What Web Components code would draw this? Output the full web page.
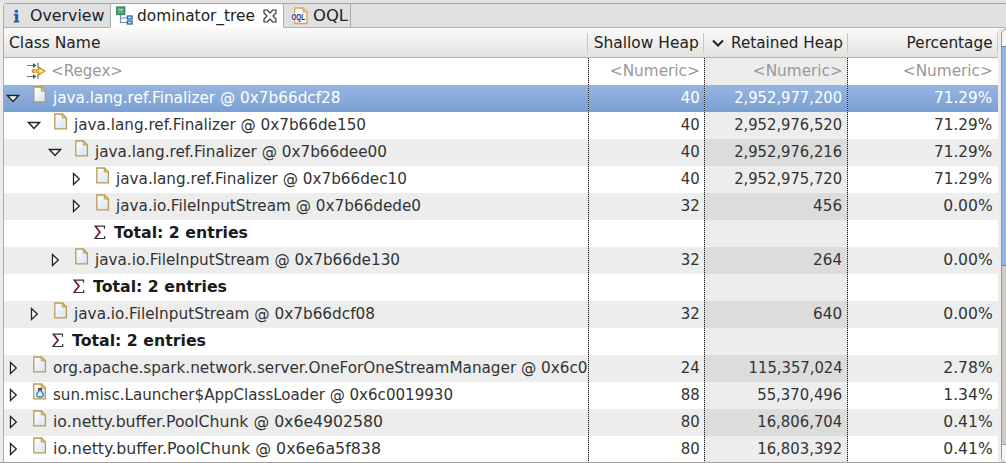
<!DOCTYPE html>
<html lang="en"><head><meta charset="utf-8"><title>dominator_tree</title>
<style>html,body{margin:0;width:1006px;height:463px;overflow:hidden;background:#edeceb}</style></head>
<body><heap-view></heap-view>
<script>
const ICONS = {
info:`<svg width="16" height="16" viewBox="0 0 16 16"><circle cx="5.4" cy="3.2" r="1.7" fill="#1763a8"/><path d="M3 6h4v7h1v1.3H3V13h1.3V7.3H3z" fill="#1763a8" stroke="#1763a8" stroke-width=".4"/></svg>`,
tree:`<svg width="18" height="20" viewBox="0 0 18 20"><path d="M4.500 10v7.500H11M4.500 13H11" fill="none" stroke="#7f8cad" stroke-width="1.200"/><rect x=".7" y="2" width="8" height="7.500" fill="#58aa76" stroke="#3a8259" stroke-width="1.300"/><path d="M2.500 4h4.500v1.500h-4.500z" fill="#9bd2ac"/><rect x="11.300" y="11" width="4.800" height="3" fill="#c5e1f7" stroke="#2769ab" stroke-width="1.300"/><rect x="11.300" y="16" width="4.800" height="3" fill="#c5e1f7" stroke="#2769ab" stroke-width="1.300"/></svg>`,
close:`<svg width="14" height="14" viewBox="0 0 14 14"><path d="M1 1h3.200L7 4l2.800-3H13v3L10 7l3 3v3H9.800L7 10l-2.800 3H1v-3l3-3-3-3z" fill="#fff" stroke="#333" stroke-width="1.150"/></svg>`,
oql:`<svg width="17" height="18" viewBox="0 0 17 18"><path d="M3.600 1h8.400l4 4v11.500H3.600z" fill="#fbfbf4" stroke="#cfac55" stroke-width="1.300"/><path d="M12 1v4h4" fill="#ebc768" stroke="#cfac55"/><rect x="0" y="6" width="14.500" height="7.500" fill="#eeeef6" opacity=".9"/><text x=".5" y="13" textLength="13.500" lengthAdjust="spacingAndGlyphs" font-family="Liberation Sans,sans-serif" font-weight="700" font-size="9" fill="#2d2b88">OQL</text></svg>`,
file:`<svg width="14" height="17" viewBox="0 0 14 17"><defs><linearGradient id="g" x2=".8" y2="1"><stop stop-color="#fff"/><stop offset="1" stop-color="#d8e5f8"/></linearGradient></defs><path d="M.8 1h7.700L12.400 5v10.800H.8z" fill="url(#g)" stroke="#b99b52" stroke-width="1.300"/><path d="M8.300 1v4h4.200z" fill="#edc978" stroke="#c39b43"/></svg>`,
sigma:`<svg width="12" height="15" viewBox="0 0 12 15"><path d="M10.500 3.700V1.200H1.200L6 7.300.8 13.500h9.900v-2.500" fill="none" stroke="#333" stroke-width="1.200"/><path d="M1.800 1.500L6 7.300 1.300 13" fill="none" stroke="#7c1f2b" stroke-width="1.500"/></svg>`,
filter:`<svg width="20" height="18" viewBox="0 0 20 18"><path d="M0 3.500h7M0 14.500h7M11 .8v5M11 12v5" stroke="#5d7688" stroke-width="1.200"/><path d="M6 1l3.500 2.500L6 6zM6 12l3.500 2.500L6 17z" fill="#3d5a70"/><path d="M5.500 7.800h6V5l6.200 4-6.200 4v-2.800h-6z" fill="#ffe1a0" stroke="#cf8e22" stroke-width="1.300"/></svg>`,
open:`<svg width="14" height="10" viewBox="0 0 14 10"><path d="M1.500 1.500h11L7 7.500z" fill="#fff" stroke="#222" stroke-width="1.400"/></svg>`,
shut:`<svg width="9" height="14" viewBox="0 0 9 14"><path d="M1.500 1.500v11L7.300 7z" fill="#fff" stroke="#222" stroke-width="1.300"/></svg>`
};
ICONS.loader = ICONS.file.replace('</svg>','<path d="M5 5h4v2.500H5z" fill="#8e3a20"/><path d="M5.500 7.500h3v1l1.700 2v2.500l-1.700 1h-3l-1.700-1v-2.500l1.700-2z" fill="#e6f2fc" stroke="#387db8" stroke-width="1.300"/></svg>');
const esc=s=>(s||'').replace(/&/g,'&amp;').replace(/</g,'&lt;').replace(/>/g,'&gt;');
class Base extends HTMLElement{
  connectedCallback(){ if(!this.shadowRoot){this.attachShadow({mode:'open'}).innerHTML=this.view();} }
}
customElements.define('ui-icon',class extends Base{
  view(){return `<style>:host{display:block;flex:none;line-height:0}svg{display:block}</style>${ICONS[this.getAttribute('name')]}`}
});
/* Label drawn at a set width; attribute w is the advance in px, "end" anchors it to the right. */
customElements.define('fit-text',class extends Base{
  view(){return `<style>:host{display:block;flex:none;white-space:pre}span{display:inline-block;transform-origin:${this.hasAttribute('end')?'100%':'0'} 50%}</style><span><slot></slot></span>`}
  connectedCallback(){super.connectedCallback();
    const s=this.shadowRoot.querySelector('span'),w=+this.getAttribute('w');
    if(w){const k=w/s.getBoundingClientRect().width;s.style.transform=`scaleX(${k})`;if(!this.hasAttribute('end'))this.style.width=w+'px'}
  }
});
customElements.define('view-tab',class extends Base{
  view(){return `<style>:host{display:flex;box-sizing:border-box;height:24px;border-right:1px solid #aaa;border-bottom:1px solid #b5b2af;background:#e0e0e0}
  :host([active]){background:#fff;border-bottom-color:#fff;border-left:1px solid #aaa;border-radius:3px 3px 0 0}</style><slot></slot>`}
});
customElements.define('head-cell',class extends Base{
  view(){return `<style>:host{display:flex;box-sizing:border-box;height:29px;align-items:center;justify-content:flex-end;padding:1px 5px 0 0;position:relative;line-height:28px;color:#222}
  :host(:first-of-type){justify-content:flex-start;padding-left:5px}
  :host::after{content:"";position:absolute;right:0;top:5px;height:20px;width:1px;background:#c9c6c3}</style><slot></slot>`}
});
customElements.define('tree-row',class extends Base{
  view(){
    const a=n=>this.getAttribute(n), lv=+a('level')||0, kind=a('kind');
    const nw=[a('w1'),a('w2'),a('w3')];
    const vals=[a('shallow'),a('retained'),a('pct')];
    let lead;
    if(kind==='filter') lead=`<ui-icon name="filter" style="margin:4px 4px 0 23px"></ui-icon>`;
    else if(kind==='total') lead=`<ui-icon name="sigma" style="margin:5px 8px 0 ${48+lv*21}px"></ui-icon>`;
    else lead=`<ui-icon name="${a('state')}" style="margin:${a('state')==='open'?9:6}px 0 0 ${(a('state')==='open'?2:5)+lv*21}px;width:${a('state')==='open'?27:24}px"></ui-icon><ui-icon name="${a('icon')||'file'}" style="margin:1px 6px 0 0"></ui-icon>`;
    return `<style>
    :host{display:grid;grid-template-columns:585px 116px 143px 150px;height:27px;line-height:26px;background:#fff;color:#333}
    :host([odd]){background:#ededed}
    :host([kind=filter]){color:#999}
    :host([kind=total]){font-weight:700;color:#1a1a1a}
    :host([selected]){background:linear-gradient(#96b6e1,#7a9fd2);color:#fff}
    .c{box-sizing:border-box;overflow:hidden;display:flex;height:27px}
    .n{justify-content:flex-end;padding-right:5.5px}
    .r{background:rgba(0,0,0,.072)}
    :host([selected]) .r{background:none}
    </style><div class="c">${lead}<fit-text w="${a('w')}">${esc(a('label'))}</fit-text></div>`+
    vals.map((v,i)=>`<div class="c n ${i===1?'r':''}">${v?`<fit-text end w="${nw[i]||''}">${esc(v)}</fit-text>`:''}</div>`).join('');
  }
});
const F=(level,state,label,w,s,r,rw,p,extra='')=>`<tree-row level="${level}" state="${state}" label="${label}" w="${w}" shallow="${s}" w1="19" retained="${r}" w2="${rw}" pct="${p}" w3="${p[0]==='7'?58:49.5}" ${extra}></tree-row>`;
const T=level=>`<tree-row kind="total" level="${level}" label="Total: 2 entries" w="134"></tree-row>`;
customElements.define('heap-view',class extends Base{
  view(){return `<style>
  :host{display:block;width:1006px;height:463px;position:relative;font:16.3px "DejaVu Sans",sans-serif;background:#edeceb;overflow:hidden}
  .tabs{display:flex;box-sizing:border-box;height:25px;margin:0 0 0 3px;border-top:1px solid #a5a5a5;border-left:1px solid #aaa;border-radius:4px 0 0 0;background:#e0e0e0;line-height:24px;color:#222}
  .rest{flex:1;border-bottom:1px solid #b5b2af}
  .top{height:3px;background:#e2e2e2}
  .main{display:flex}
  .table{box-sizing:border-box;width:995px;margin-left:3px;border-left:1px solid #aaa8a5;position:relative}
  .head{display:grid;grid-template-columns:584px 116px 144px 150px;height:30px;box-sizing:border-box;border-bottom:1px solid #b7b3af;background:linear-gradient(#fbfbfa,#e4e2e0)}
  .grid{position:absolute;top:30px;bottom:0;width:1px;background:repeating-linear-gradient(#222 0 1px,#bbb 1px 2px)}
  .bar{flex:1;display:flex;padding:1px 0 0 3px}
  .scroll{box-sizing:border-box;width:20px;flex:none;border:1px solid #9a9794;border-radius:5px;background:#d0cdc9;overflow:hidden;height:434px}
  .btn{height:16px;background:#f7f6f5;border-bottom:1px solid #6484b0}
  .thumb{height:218px;background:#91b5e5;border-bottom:1px solid #6484b0}
  .end{margin-top:178px;height:18px;background:#f7f6f5;border-top:1px solid #9a9794}
  .foot{position:absolute;left:0;right:0;bottom:0;height:1px;background:#a5a29f}
  </style>
  <div class="top"></div>
  <div class="tabs">
   <view-tab style="width:106px;border-right:0"><ui-icon name="info" style="margin:4px 0 0 7px;width:19px"></ui-icon><fit-text w="74.5">Overview</fit-text></view-tab>
   <view-tab active style="width:174px"><ui-icon name="tree" style="margin:1px 3px 0 5px"></ui-icon><fit-text w="118">dominator_tree</fit-text><ui-icon name="close" style="margin:5px 0 0 8px"></ui-icon></view-tab>
   <view-tab style="width:67px"><ui-icon name="oql" style="margin:3px 5px 0 7px"></ui-icon><fit-text w="35">OQL</fit-text></view-tab>
   <div class="rest"></div>
  </div>
  <div class="main"><div class="table">
   <div class="head"><head-cell><fit-text w="91.500">Class Name</fit-text></head-cell><head-cell><fit-text end w="105">Shallow Heap</fit-text></head-cell>
   <head-cell><svg width="12" height="9" viewBox="0 0 12 9" style="margin-right:7px"><path d="M1 1.500l5 5 5-5" fill="none" stroke="#222" stroke-width="2"/></svg><fit-text w="112">Retained Heap</fit-text></head-cell><head-cell><fit-text end w="86">Percentage</fit-text></head-cell></div>
   <tree-row kind="filter" label="&lt;Regex&gt;" w="72" shallow="&lt;Numeric&gt;" w1="90" retained="&lt;Numeric&gt;" w2="90" pct="&lt;Numeric&gt;" w3="90"></tree-row>`
   +F(0,'open','java.lang.ref.Finalizer @ 0x7b66dcf28',287.5,40,'2,952,977,200',108,'71.29%','selected')
   +F(1,'open','java.lang.ref.Finalizer @ 0x7b66de150',292,40,'2,952,976,520',108,'71.29%')
   +F(2,'open','java.lang.ref.Finalizer @ 0x7b66dee00',292,40,'2,952,976,216',108,'71.29%','odd')
   +F(3,'shut','java.lang.ref.Finalizer @ 0x7b66dec10',291,40,'2,952,975,720',108,'71.29%')
   +F(3,'shut','java.io.FileInputStream @ 0x7b66dede0',305,32,'456',29,'0.00%','odd')
   +T(2)
   +F(2,'shut','java.io.FileInputStream @ 0x7b66de130',305,32,'264',29,'0.00%','odd')
   +T(1)
   +F(1,'shut','java.io.FileInputStream @ 0x7b66dcf08',301,32,'640',29,'0.00%','odd')
   +T(0)
   +F(0,'shut','org.apache.spark.network.server.OneForOneStreamManager @ 0x6c0',534.5,24,'115,357,024',94,'2.78%','odd')
   +F(0,'shut','sun.misc.Launcher$AppClassLoader @ 0x6c0019930',400,88,'55,370,496',85,'1.34%','icon="loader"')
   +F(0,'shut','io.netty.buffer.PoolChunk @ 0x6e4902580',330,80,'16,806,704',85,'0.41%','odd')
   +F(0,'shut','io.netty.buffer.PoolChunk @ 0x6e6a5f838',328,80,'16,803,392',85,'0.41%')
   +`<div class="grid" style="left:584px"></div><div class="grid" style="left:700px"></div><div class="grid" style="left:843px"></div>
  </div><div class="bar"><div class="scroll"><div class="btn"></div><div class="thumb"></div><div class="end"></div></div></div></div>
  <div class="foot"></div>`}
});
</script></body></html>
